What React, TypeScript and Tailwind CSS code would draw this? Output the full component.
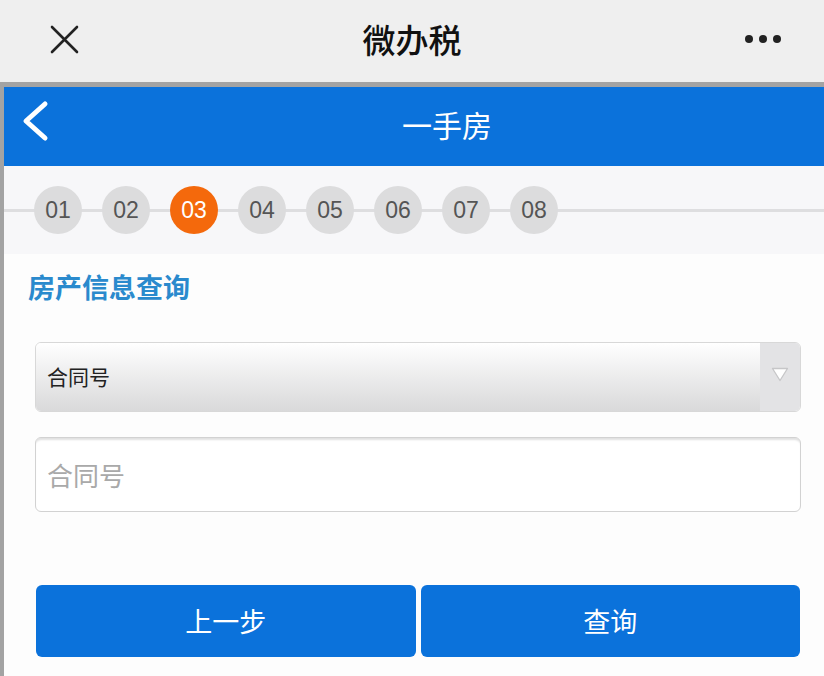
import React from 'react';

const steps = ['01', '02', '03', '04', '05', '06', '07', '08'];

export default function App() {
    return (
        <div className="w-[824px] h-[676px] overflow-hidden flex flex-col bg-[#fdfdfd]" style={{ fontFamily: '"Noto Sans CJK SC", "Noto Sans", sans-serif' }}>
            {/* wechat bar */}
            <div className="h-[82px] shrink-0 bg-[#efefef] flex items-center relative">
                <svg className="absolute left-[50px] top-[25px]" width="29" height="29" viewBox="0 0 29 29">
                    <path d="M2 2 L27 27 M27 2 L2 27" stroke="#222" strokeWidth="2.6" strokeLinecap="round" />
                </svg>
                <div className="flex-1 text-center text-[33px] text-[#111] font-medium leading-none pb-[4px]">微办税</div>
                <div className="absolute left-[745px] top-[35px] flex gap-[6px]">
                    <span className="w-[8px] h-[8px] rounded-full bg-[#222]"></span>
                    <span className="w-[8px] h-[8px] rounded-full bg-[#222]"></span>
                    <span className="w-[8px] h-[8px] rounded-full bg-[#222]"></span>
                </div>
            </div>
            <div className="h-[5px] shrink-0 bg-[#a3a3a3]"></div>

            <div className="flex flex-1">
                <div className="w-[4px] bg-[#a3a3a3]"></div>
                <div className="flex-1 flex flex-col">
                    {/* blue header */}
                    <div className="h-[79px] bg-[#0b72db] flex items-center relative">
                        <svg className="absolute left-[14px] top-[12px]" width="36" height="44" viewBox="0 0 36 44">
                            <path d="M27 5 L8 22 L27 39" fill="none" stroke="#fff" strokeWidth="5" strokeLinecap="round" strokeLinejoin="round" />
                        </svg>
                        <div className="flex-1 text-center text-white text-[30px] pl-[66px] pb-[4px]">一手房</div>
                    </div>

                    {/* steps */}
                    <div className="h-[88px] bg-[#f7f7f9] relative flex items-center">
                        <div className="absolute left-0 right-0 top-[43px] h-[3px] bg-[#dedee0]"></div>
                        <div className="relative flex gap-[20px] pl-[30px]">
                            {steps.map((s) => (
                                <div
                                    key={s}
                                    className={`w-[48px] h-[48px] rounded-full flex items-center justify-center text-[23px] ${s === '03' ? 'bg-[#f4690c] text-white' : 'bg-[#dcdcdd] text-[#555]'}`}
                                    style={{ fontFamily: '"Liberation Sans", Arial, sans-serif' }}
                                >
                                    {s}
                                </div>
                            ))}
                        </div>
                    </div>

                    {/* form */}
                    <div className="flex-1 flex flex-col pl-[31px] pr-[23px] pt-[19px]">
                        <div className="text-[27px] font-bold text-[#2a8acd] leading-none -ml-[7px]">房产信息查询</div>

                        <div className="mt-[42px] h-[70px] rounded-[6px] border border-[#d8d8d8] flex overflow-hidden">
                            <div className="flex-1 bg-gradient-to-b from-[#ffffff] to-[#d9d9da] flex items-center pl-[11px] text-[21px] text-[#222]">合同号</div>
                            <div className="w-[40px] bg-[#e3e3e5] flex items-start justify-center pt-[24px]">
                                <svg width="18" height="15" viewBox="0 0 18 15">
                                    <path d="M1.5 1.5 L9 13.5 L16.5 1.5 Z" fill="#fff" stroke="#c6c6c8" strokeWidth="1.3" strokeLinejoin="round" />
                                </svg>
                            </div>
                        </div>

                        <div className="mt-[25px] h-[75px] rounded-[6px] border border-[#d2d2d2] bg-white shadow-[inset_0_3px_2px_-1px_rgba(0,0,0,0.12)] flex items-center pl-[11px] text-[26px] text-[#a9a9a9]">合同号</div>

                        <div className="mt-[73px] flex gap-[5px] px-[1px]">
                            <button className="flex-1 h-[72px] rounded-[6px] bg-[#0b72db] text-white text-[27px]">上一步</button>
                            <button className="flex-1 h-[72px] rounded-[6px] bg-[#0b72db] text-white text-[27px]">查询</button>
                        </div>
                    </div>
                </div>
            </div>
        </div>
    );
}
